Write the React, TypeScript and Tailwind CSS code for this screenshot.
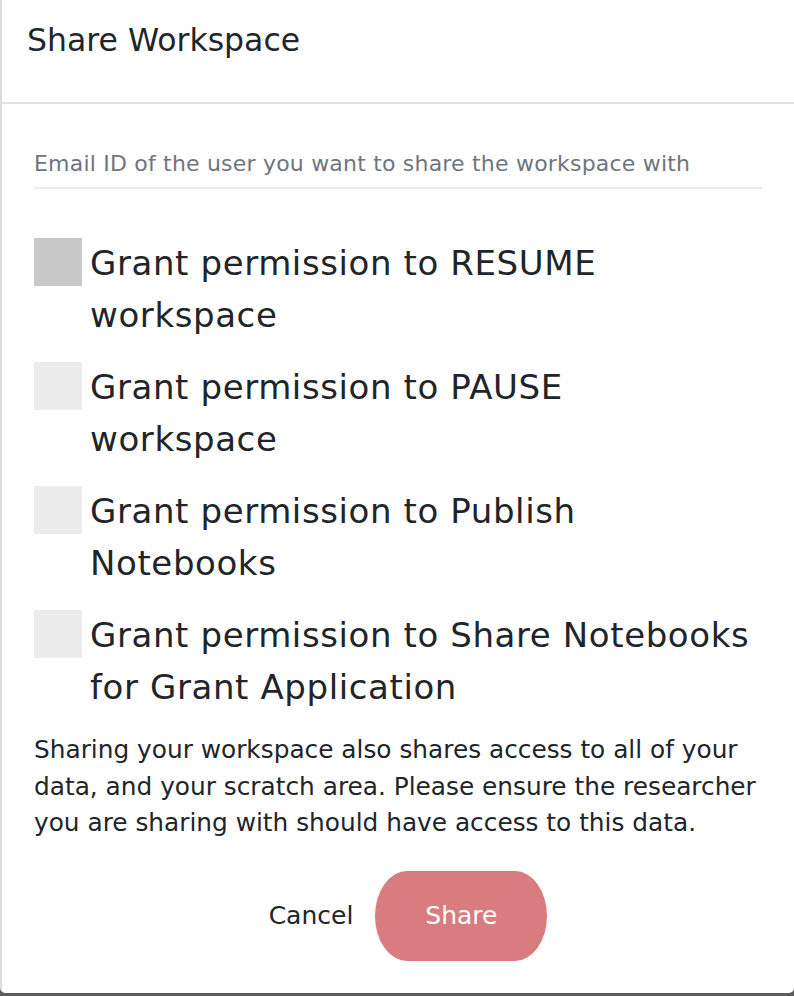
import { useState } from "react";

const permissions = [
  { lines: ["Grant permission to RESUME", "workspace"], tone: "bg-[#c8c8c8]" },
  { lines: ["Grant permission to PAUSE", "workspace"], tone: "bg-[#ececec]" },
  { lines: ["Grant permission to Publish", "Notebooks"], tone: "bg-[#ececec]" },
  { lines: ["Grant permission to Share Notebooks", "for Grant Application"], tone: "bg-[#ececec]" },
];

export default function App() {
  const [email, setEmail] = useState("");

  return (
    <div className="h-[996px] w-[794px] bg-[#5c5c5c] font-['DejaVu_Sans',sans-serif] text-[#212529]">
      <div className="flex h-[993px] flex-col rounded-b-[5px] border-l-2 border-[#dcdcdc] bg-white">
        <div className="h-[104px] border-b-2 border-[#dee2e6] pl-[25px] pt-[21px]">
          <h1 className="text-[31.5px] leading-[38px]">Share Workspace</h1>
        </div>

        <div className="flex flex-col px-8 pt-[35px]">
          <input
            value={email}
            onChange={(e) => setEmail(e.target.value)}
            placeholder="Email ID of the user you want to share the workspace with"
            className="h-[50px] w-full border-b-2 border-[#e9ecef] text-[22px] tracking-[0.2px] outline-none placeholder:text-[#6f757e]"
          />

          <div className="mt-[48px] flex flex-col gap-5">
            {permissions.map((p) => (
              <label key={p.lines[0]} className="flex gap-2">
                <span className={`mt-px h-12 w-12 shrink-0 ${p.tone}`} />
                <span className="text-[34px] leading-[52px] tracking-[0.6px]">
                  {p.lines[0]}
                  <br />
                  {p.lines[1]}
                </span>
              </label>
            ))}
          </div>

          <p className="mt-[19px] text-[24.8px] leading-[36.5px]">
            Sharing your workspace also shares access to all of your
            <br />
            data, and your scratch area. Please ensure the researcher
            <br />
            you are sharing with should have access to this data.
          </p>

          <div className="mt-[29px] flex justify-center gap-[2px]">
            <button className="px-5 text-[25px]">Cancel</button>
            <button className="h-[90px] w-[172px] rounded-[32px_/_45px] bg-[#d87c80] text-[25px] text-white">
              Share
            </button>
          </div>
        </div>
      </div>
    </div>
  );
}
